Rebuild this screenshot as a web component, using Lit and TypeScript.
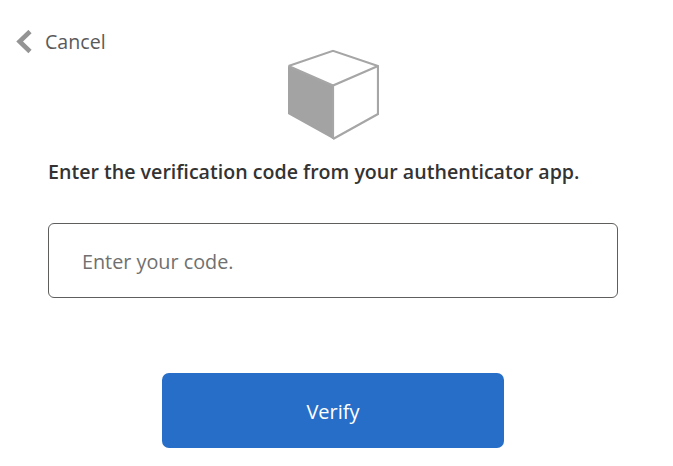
import { LitElement, html, css } from "lit";
import { customElement } from "lit/decorators.js";

@customElement("app-root")
export class AppRoot extends LitElement {
  static styles = css`
    :host {
      display: block;
      width: 673px;
      height: 466px;
      background: #fff;
      font-family: "Open Sans", "Noto Sans", sans-serif;
      overflow: hidden;
    }
    .page {
      display: flex;
      flex-direction: column;
      align-items: stretch;
      padding: 0 55px 0 48px;
    }
    .cancel {
      display: flex;
      align-items: center;
      height: 28px;
      margin: 28px 0 0 -32px;
      gap: 13px;
      font-size: 19.6px;
      color: #5a5a5a;
    }
    .cancel span {
      margin-top: -2px;
    }
    .cube {
      display: block;
      align-self: center;
      margin: -7px 0 0 0;
      transform: translateY(0.5px);
    }
    h1 {
      margin: 18px 0 0;
      font-size: 19.63px;
      line-height: 28px;
      font-weight: 600;
      color: #333;
      white-space: nowrap;
    }
    .field {
      display: block;
      box-sizing: border-box;
      width: 570px;
      height: 75px;
      margin-top: 37px;
      padding: 2px 33px 0;
      border: 1px solid #605e5c;
      border-radius: 6px;
      font: 400 19.8px "Open Sans", "Noto Sans", sans-serif;
      color: #333;
      outline: none;
      background: #fff;
    }
    .field::placeholder {
      color: #707070;
      opacity: 1;
    }
    .verify {
      display: block;
      align-self: center;
      width: 342px;
      height: 75px;
      margin-top: 75px;
      padding: 2px 0 0;
      border: none;
      border-radius: 7px;
      background: #276ec8;
      color: #fff;
      font: 400 20px "Open Sans", "Noto Sans", sans-serif;
    }
  `;

  render() {
    return html`
      <div class="page">
        <div class="cancel">
          <svg width="16" height="24" viewBox="0 0 16 24" aria-hidden="true">
            <path d="M14 1.5 L3.6 11.5 L14 21.5" fill="none" stroke="#949494" stroke-width="4.6"></path>
          </svg>
          <span>Cancel</span>
        </div>
        <svg class="cube" width="92" height="91" viewBox="287 49.5 92 91" aria-hidden="true">
          <path d="M288 66 L333 85.5 V139 L288 114 Z" fill="#a3a3a3"></path>
          <path d="M288.5 66 L333 50.8 L378 66 L378 114 L333 139 M288.5 66 L333 85.5 L378 66 M333 85.5 V139"
            fill="none" stroke="#a6a6a6" stroke-width="2.2"></path>
        </svg>
        <h1>Enter the verification code from your authenticator app.</h1>
        <input class="field" placeholder="Enter your code." />
        <button class="verify">Verify</button>
      </div>
    `;
  }
}
